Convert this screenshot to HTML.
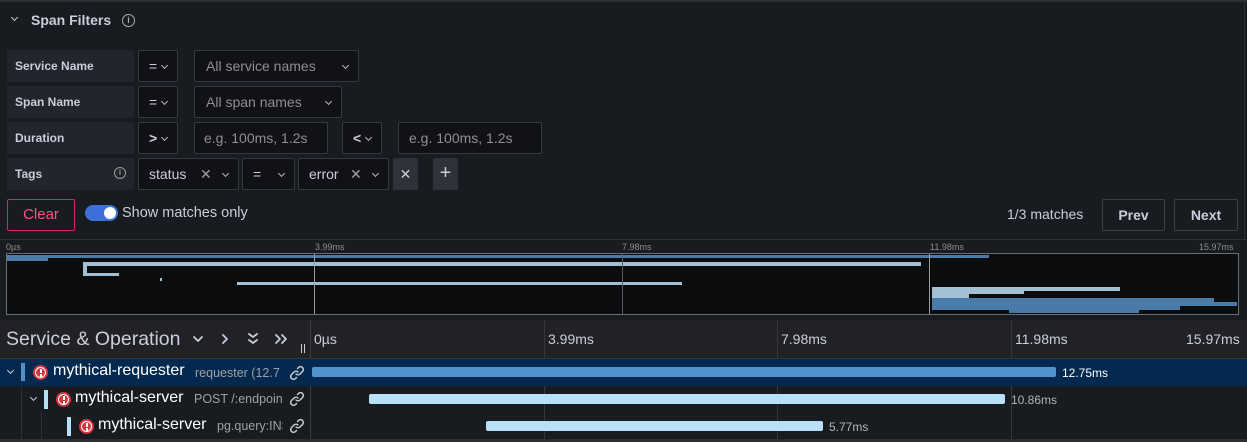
<!DOCTYPE html><html><head><meta charset="utf-8"><style>
*{box-sizing:border-box;margin:0;padding:0}
body{width:1247px;height:442px;background:#181b1f;font-family:"Liberation Sans",sans-serif;color:#ccccdc;position:relative;overflow:hidden;font-size:14px}
.a{position:absolute}
.lbl{position:absolute;left:7px;width:127px;height:32px;background:#22252b;font-size:12px;font-weight:bold;color:#ccccdc;padding:9px 8px;line-height:14px}
.in{position:absolute;height:32px;border:1px solid #34373d;background:#111217;border-radius:2px;font-size:14px;color:#ccccdc;line-height:30px;padding-left:10px}
.ph{color:#8e8e95}
.chev{position:absolute;right:10px;top:12px;width:5px;height:5px;border-right:1.2px solid #bbb;border-bottom:1.2px solid #bbb;transform:rotate(45deg)}
.ch{position:absolute;width:6px;height:6px;border-right:1.5px solid #ccccdc;border-bottom:1.5px solid #ccccdc;transform:rotate(45deg)}
.x{position:absolute;font-size:14px;color:#9fa0a5}
.btn{position:absolute;height:32px;border:1px solid #3c3f45;border-radius:2px;font-size:14px;font-weight:bold;line-height:30px;text-align:center;color:#ccccdc}
.mb{position:absolute}
.tl{position:absolute;font-size:9px;color:#8e8e95;top:242px}
.row{position:absolute;left:0;width:1247px;height:27px}
.err{position:absolute;width:15px;height:15px;border-radius:50%;background:#d1373f}
.err:after{content:"";position:absolute;left:2px;top:2px;width:11px;height:11px;border-radius:50%;border:1.5px solid #fff;box-sizing:border-box}
.err:before{content:"";position:absolute;left:6.5px;top:4px;width:2px;height:4px;background:#fff;box-shadow:0 5px 0 -0px #fff}
.bar{position:absolute;height:10px;border-radius:2px}
.dl{position:absolute;font-size:12px;color:#ccccdc}
.nm{position:absolute;font-size:16px;color:#fff}
</style></head><body>
<div class="a" style="left:0;top:0;width:1247px;height:2px;background:#2b2e33"></div>
<div class="ch" style="left:12px;top:15px;width:5px;height:5px"></div>
<div class="a" style="left:31px;top:12px;font-size:14px;font-weight:bold;color:#ccccdc">Span Filters</div>
<div class="a" style="left:122px;top:14px;width:13px;height:13px;border:1.3px solid #aaa;border-radius:50%;font-size:9px;text-align:center;line-height:11px;color:#aaa;font-weight:bold">i</div>

<div class="lbl" style="top:50px">Service Name</div>
<div class="in" style="left:138px;top:50px;width:40px">=<span class="chev"></span></div>
<div class="in ph" style="left:194px;top:50px;width:165px;padding-left:11px">All service names<span class="chev"></span></div>

<div class="lbl" style="top:86px">Span Name</div>
<div class="in" style="left:138px;top:86px;width:40px">=<span class="chev"></span></div>
<div class="in ph" style="left:194px;top:86px;width:148px;padding-left:11px">All span names<span class="chev"></span></div>

<div class="lbl" style="top:122px">Duration</div>
<div class="in" style="left:138px;top:122px;width:40px;font-weight:bold">&gt;<span class="chev"></span></div>
<div class="in ph" style="left:194px;top:122px;width:134px;padding-left:9px">e.g. 100ms, 1.2s</div>
<div class="in" style="left:342px;top:122px;width:40px;font-weight:bold">&lt;<span class="chev"></span></div>
<div class="in ph" style="left:398px;top:122px;width:144px">e.g. 100ms, 1.2s</div>

<div class="lbl" style="top:158px">Tags</div>
<div class="a" style="left:114px;top:167px;width:12px;height:12px;border:1.2px solid #999;border-radius:50%;font-size:8px;text-align:center;line-height:10px;color:#999;font-weight:bold">i</div>
<div class="in" style="left:138px;top:158px;width:101px">status<span class="x" style="left:61px;top:0">✕</span><span class="chev"></span></div>
<div class="in" style="left:242px;top:158px;width:53px">=<span class="chev"></span></div>
<div class="in" style="left:298px;top:158px;width:91px">error<span class="x" style="left:51px;top:0">✕</span><span class="chev"></span></div>
<div class="a" style="left:393px;top:158px;width:25px;height:32px;background:#2f3238;border-radius:2px;color:#ccccdc;text-align:center;line-height:32px;font-size:14px">✕</div>
<div class="a" style="left:433px;top:158px;width:25px;height:32px;background:#2f3238;border-radius:2px;color:#ccccdc;text-align:center;line-height:31px;font-size:20px">+</div>

<div class="a" style="left:7px;top:199px;width:68px;height:32px;border:1px solid #e0226e;border-radius:2px;color:#ff5286;font-size:15px;text-align:center;line-height:30px">Clear</div>
<div class="a" style="left:85px;top:205px;width:33px;height:16px;border-radius:8px;background:#3d71d9"></div>
<div class="a" style="left:104px;top:207px;width:12px;height:12px;border-radius:50%;background:#fff"></div>
<div class="a" style="left:122px;top:205px;font-size:14.5px;color:#ccccdc">Show matches only</div>

<div class="a" style="left:1007px;top:206px;font-size:14px;color:#ccccdc">1/3 matches</div>
<div class="btn" style="left:1102px;top:199px;width:63px">Prev</div>
<div class="btn" style="left:1174px;top:199px;width:64px">Next</div>

<div class="a" style="left:0;top:239px;width:1247px;height:1px;background:#2b2e33"></div>
<div class="a" style="left:1244px;top:0;width:1px;height:240px;background:#2b2e33"></div>

<div class="tl" style="left:6px">0µs</div>
<div class="tl" style="left:315px">3.99ms</div>
<div class="tl" style="left:622px">7.98ms</div>
<div class="tl" style="left:930px">11.98ms</div>
<div class="tl" style="left:1199px">15.97ms</div>

<div class="a" style="left:6px;top:253px;width:1233px;height:62px;background:#0b0c0e;border:1px solid #6c6e74"></div>
<div class="mb" style="left:7px;top:255px;width:982px;height:3px;background:#4a7aa8"></div>
<div class="mb" style="left:7px;top:255px;width:41px;height:6px;background:#4a7aa8"></div>
<div class="mb" style="left:83px;top:262px;width:838px;height:4px;background:#a3bfd2"></div>
<div class="mb" style="left:83px;top:262px;width:4px;height:14px;background:#a3bfd2"></div>
<div class="mb" style="left:83px;top:273px;width:36px;height:3px;background:#a3bfd2"></div>
<div class="mb" style="left:160px;top:278px;width:2px;height:3px;background:#a3bfd2"></div>
<div class="mb" style="left:237px;top:282px;width:445px;height:3px;background:#a3bfd2"></div>
<div class="mb" style="left:932px;top:287px;width:188px;height:4px;background:#a3bfd2"></div>
<div class="mb" style="left:932px;top:287px;width:92px;height:7px;background:#a3bfd2"></div>
<div class="mb" style="left:932px;top:287px;width:37px;height:11px;background:#a3bfd2"></div>
<div class="mb" style="left:932px;top:298px;width:282px;height:8px;background:#4a7aa8"></div>
<div class="mb" style="left:932px;top:302px;width:305px;height:4px;background:#4a7aa8"></div>
<div class="mb" style="left:932px;top:306px;width:248px;height:4px;background:#4a7aa8"></div>
<div class="mb" style="left:1009px;top:306px;width:130px;height:7px;background:#4a7aa8"></div>
<div class="mb" style="left:314px;top:254px;width:1px;height:60px;background:#9a9a9a"></div>
<div class="mb" style="left:622px;top:254px;width:1px;height:60px;background:#5a5b60"></div>
<div class="mb" style="left:929px;top:254px;width:1px;height:60px;background:#9a9a9a"></div>

<div class="a" style="left:0;top:320px;width:1247px;height:38px;background:#202226"></div>
<div class="a" style="left:6px;top:328px;font-size:19.5px;color:#ccccdc">Service &amp; Operation</div>
<svg class="a" style="left:190px;top:331px" width="100" height="16" viewBox="0 0 100 16" fill="none" stroke="#ccccdc" stroke-width="1.8" stroke-linecap="round" stroke-linejoin="round">
<path d="M4 6l4 4 4-4"/>
<path d="M33 4l4 4-4 4"/>
<path d="M59 3l4 3 4-3M59 9l4 3 4-3"/>
<path d="M86 4l4 4-4 4M92 4l4 4-4 4"/>
</svg>
<div class="a" style="left:301px;top:344px;width:1px;height:9px;background:#ccc"></div>
<div class="a" style="left:304px;top:344px;width:1px;height:9px;background:#ccc"></div>
<div class="a" style="left:310px;top:320px;width:1px;height:122px;background:#3a3c42"></div>
<div class="a" style="left:544px;top:320px;width:1px;height:122px;background:#34363b"></div>
<div class="a" style="left:777px;top:320px;width:1px;height:122px;background:#34363b"></div>
<div class="a" style="left:1011px;top:320px;width:1px;height:122px;background:#34363b"></div>
<div class="a" style="left:314px;top:331px;font-size:14px;color:#ccccdc">0µs</div>
<div class="a" style="left:548px;top:331px;font-size:14px;color:#ccccdc">3.99ms</div>
<div class="a" style="left:781px;top:331px;font-size:14px;color:#ccccdc">7.98ms</div>
<div class="a" style="left:1015px;top:331px;font-size:14px;color:#ccccdc">11.98ms</div>
<div class="a" style="left:1186px;top:331px;font-size:14px;color:#ccccdc">15.97ms</div>
<div class="a" style="left:0;top:358px;width:1247px;height:1px;background:#34363b"></div>

<div class="row" style="top:359px;height:27px;background:#03294f"></div>
<div class="ch" style="left:8px;top:368px;width:5px;height:5px"></div>
<div class="a" style="left:21px;top:363px;width:4px;height:18px;background:#5290c9"></div>
<div class="err" style="left:33px;top:365px"></div>
<div class="nm" style="left:53px;top:362px">mythical-requester</div>
<div class="a" style="left:195px;top:366px;font-size:12.5px;color:#9fa0a5;width:88px;overflow:hidden;white-space:nowrap">requester (12.7</div>
<svg class="a" style="left:289px;top:365px" width="16" height="16" viewBox="0 0 16 16" fill="none" stroke="#ccc" stroke-width="1.5" stroke-linecap="round"><path d="M7 9a3 3 0 0 0 4 0l2.5-2.5a2.8 2.8 0 0 0-4-4L8.5 3.5"/><path d="M9 7a3 3 0 0 0-4 0L2.5 9.5a2.8 2.8 0 0 0 4 4l1-1"/></svg>
<div class="bar" style="left:312px;top:367px;width:744px;background:#5193cf"></div>
<div class="dl" style="left:1062px;top:366px;color:#fff">12.75ms</div>

<div class="ch" style="left:31px;top:395px;width:5px;height:5px"></div>
<div class="a" style="left:44px;top:390px;width:4px;height:19px;background:#b7dff5"></div>
<div class="err" style="left:56px;top:392px"></div>
<div class="nm" style="left:75px;top:389px">mythical-server</div>
<div class="a" style="left:194px;top:392px;font-size:12.5px;color:#9fa0a5;width:88px;overflow:hidden;white-space:nowrap">POST /:endpoint</div>
<svg class="a" style="left:289px;top:391px" width="16" height="16" viewBox="0 0 16 16" fill="none" stroke="#ccc" stroke-width="1.5" stroke-linecap="round"><path d="M7 9a3 3 0 0 0 4 0l2.5-2.5a2.8 2.8 0 0 0-4-4L8.5 3.5"/><path d="M9 7a3 3 0 0 0-4 0L2.5 9.5a2.8 2.8 0 0 0 4 4l1-1"/></svg>
<div class="bar" style="left:369px;top:394px;width:636px;background:#b8e0f6"></div>
<div class="dl" style="left:1011px;top:393px;color:#b5b5bb">10.86ms</div>

<div class="a" style="left:21px;top:386px;width:1px;height:56px;background:#2e3035"></div>
<div class="a" style="left:41px;top:412px;width:1px;height:30px;background:#2e3035"></div>
<div class="a" style="left:67px;top:417px;width:4px;height:19px;background:#b7dff5"></div>
<div class="err" style="left:79px;top:419px"></div>
<div class="nm" style="left:98px;top:416px">mythical-server</div>
<div class="a" style="left:217px;top:419px;font-size:12.5px;color:#9fa0a5;width:66px;overflow:hidden;white-space:nowrap">pg.query:INSERT</div>
<svg class="a" style="left:289px;top:418px" width="16" height="16" viewBox="0 0 16 16" fill="none" stroke="#ccc" stroke-width="1.5" stroke-linecap="round"><path d="M7 9a3 3 0 0 0 4 0l2.5-2.5a2.8 2.8 0 0 0-4-4L8.5 3.5"/><path d="M9 7a3 3 0 0 0-4 0L2.5 9.5a2.8 2.8 0 0 0 4 4l1-1"/></svg>
<div class="bar" style="left:486px;top:421px;width:337px;background:#b8e0f6"></div>
<div class="dl" style="left:829px;top:420px;color:#b5b5bb">5.77ms</div>
<div class="a" style="left:0;top:439px;width:1247px;height:3px;background:#2b2e33"></div>
</body></html>
